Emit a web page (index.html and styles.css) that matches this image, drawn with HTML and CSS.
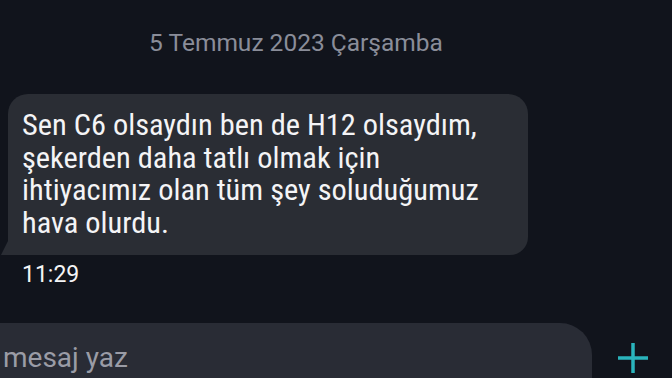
FILE: index.html
```html
<!DOCTYPE html>
<html lang="tr">
  <head>
    <meta charset="UTF-8" />
    <meta name="viewport" content="width=device-width, initial-scale=1.0" />
    <title>Mesajlar</title>
    <link rel="stylesheet" href="styles.css">
  </head>
  <body>
    <main class="chat">
      <div class="date">5 Temmuz 2023 Çarşamba</div>
      <div class="msg">
        <div class="bubble">
          Sen C6 olsaydın ben de H12 olsaydım,<br>
          şekerden daha tatlı olmak için<br>
          ihtiyacımız olan tüm şey soluduğumuz<br>
          hava olurdu.
        </div>
        <div class="time">11:29</div>
      </div>
    </main>
    <footer class="composer">
      <div class="input">mesaj yaz</div>
      <button class="add" aria-label="ekle">
        <svg width="32" height="32" viewBox="0 0 32 32">
          <path d="M16 1v30M1 16h30" stroke="#2ab4bc" stroke-width="3.5" fill="none"/>
        </svg>
      </button>
    </footer>
  </body>
</html>
```

FILE: styles.css
```css
*{
    margin: 0px;
    padding: 0px;
    box-sizing: border-box;
    font-family: Roboto, "Noto Sans", sans-serif;
}
body{
    background-color: #11141c;
    width: 672px;
    height: 378px;
    overflow: hidden;
    display: flex;
    flex-direction: column;
}
.chat{
    flex: 1;
}
.date{
    padding: 28px 80px 0 0;
    text-align: center;
    color: #8a8d99;
    font-size: 24.5px;
    line-height: 30px;
}
.msg{
    margin-top: 36px;
    padding-left: 8px;
}
.bubble{
    position: relative;
    width: 520px;
    background-color: #2a2d34;
    color: #f4f4f6;
    font-family: "Roboto Condensed", Roboto, sans-serif;
    font-size: 30.4px;
    line-height: 32.5px;
    white-space: nowrap;
    padding: 15px 14px 16px 14px;
    border-radius: 20px 20px 18px 0;
}
.bubble::before{
    content: "";
    position: absolute;
    left: -7px;
    bottom: 0;
    width: 0;
    height: 0;
    border-left: 7px solid transparent;
    border-bottom: 14px solid #2a2d34;
}
.time{
    margin-top: 6px;
    padding-left: 14px;
    color: #f4f4f6;
    font-size: 23px;
    line-height: 28px;
}
.composer{
    display: flex;
    align-items: center;
    height: 55px;
}
.input{
    flex: none;
    width: 602px;
    height: 100%;
    margin-left: -10px;
    padding: 18px 0 0 13px;
    background-color: #292c35;
    border-radius: 0 32px 0 0;
    color: #9a9ca6;
    font-size: 28px;
    line-height: 33px;
}
.add{
    flex: none;
    margin-left: 25px;
    margin-top: 14px;
    background: none;
    border: none;
    display: flex;
}
```
